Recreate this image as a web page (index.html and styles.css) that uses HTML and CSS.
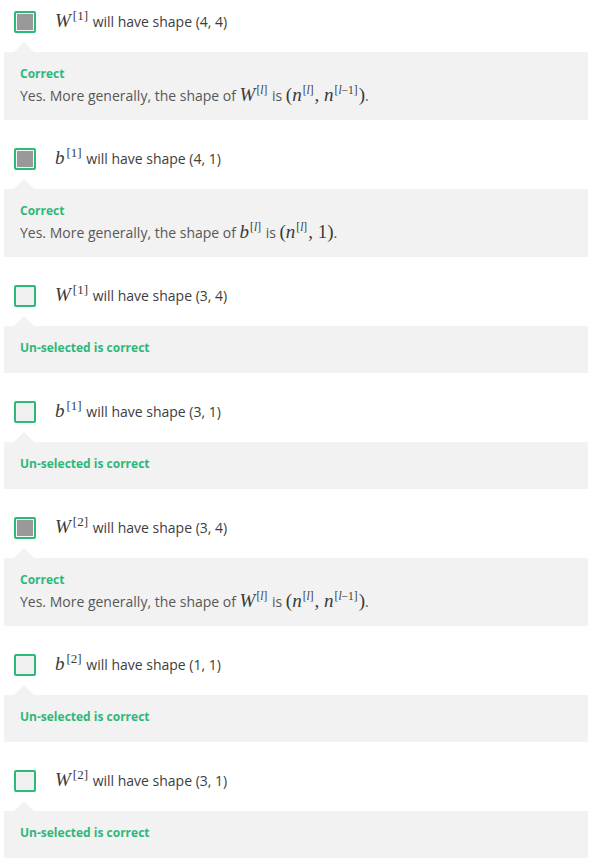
FILE: index.html
```html
<!DOCTYPE html>
<html>
<head>
<meta charset="utf-8">
<link rel="stylesheet" href="styles.css">
</head>
<body>
<div class="quiz">
  <div class="item">
    <div class="option">
      <span class="cb checked"></span>
      <span class="opt-text"><span class="m"><i class="mi">W</i><span class="sup">[1]</span></span> will have shape (4, 4)</span>
    </div>
    <div class="feedback">
      <div class="label">Correct</div>
      <div class="body">Yes. More generally, the shape of <span class="m"><i class="mi">W</i><span class="sup">[<i>l</i>]</span></span> is <span class="m"><span class="paren">(</span><i class="mi">n</i><span class="sup">[<i>l</i>]</span>, <i class="mi">n</i><span class="sup">[<i>l</i>−1]</span><span class="paren">)</span></span>.</div>
    </div>
  </div>

  <div class="item">
    <div class="option">
      <span class="cb checked"></span>
      <span class="opt-text"><span class="m"><i class="mi">b</i><span class="sup">[1]</span></span> will have shape (4, 1)</span>
    </div>
    <div class="feedback">
      <div class="label">Correct</div>
      <div class="body">Yes. More generally, the shape of <span class="m"><i class="mi">b</i><span class="sup">[<i>l</i>]</span></span> is <span class="m"><span class="paren">(</span><i class="mi">n</i><span class="sup">[<i>l</i>]</span>, 1<span class="paren">)</span></span>.</div>
    </div>
  </div>

  <div class="item">
    <div class="option">
      <span class="cb"></span>
      <span class="opt-text"><span class="m"><i class="mi">W</i><span class="sup">[1]</span></span> will have shape (3, 4)</span>
    </div>
    <div class="feedback short">
      <div class="label">Un-selected is correct</div>
    </div>
  </div>

  <div class="item">
    <div class="option">
      <span class="cb"></span>
      <span class="opt-text"><span class="m"><i class="mi">b</i><span class="sup">[1]</span></span> will have shape (3, 1)</span>
    </div>
    <div class="feedback short">
      <div class="label">Un-selected is correct</div>
    </div>
  </div>

  <div class="item">
    <div class="option">
      <span class="cb checked"></span>
      <span class="opt-text"><span class="m"><i class="mi">W</i><span class="sup">[2]</span></span> will have shape (3, 4)</span>
    </div>
    <div class="feedback">
      <div class="label">Correct</div>
      <div class="body">Yes. More generally, the shape of <span class="m"><i class="mi">W</i><span class="sup">[<i>l</i>]</span></span> is <span class="m"><span class="paren">(</span><i class="mi">n</i><span class="sup">[<i>l</i>]</span>, <i class="mi">n</i><span class="sup">[<i>l</i>−1]</span><span class="paren">)</span></span>.</div>
    </div>
  </div>

  <div class="item">
    <div class="option">
      <span class="cb"></span>
      <span class="opt-text"><span class="m"><i class="mi">b</i><span class="sup">[2]</span></span> will have shape (1, 1)</span>
    </div>
    <div class="feedback short">
      <div class="label">Un-selected is correct</div>
    </div>
  </div>

  <div class="item">
    <div class="option">
      <span class="cb"></span>
      <span class="opt-text"><span class="m"><i class="mi">W</i><span class="sup">[2]</span></span> will have shape (3, 1)</span>
    </div>
    <div class="feedback short">
      <div class="label">Un-selected is correct</div>
    </div>
  </div>
</div>
</body>
</html>
```

FILE: styles.css
```css
html, body {
  margin: 0;
  padding: 0;
  background: #ffffff;
}

body {
  font-family: "Open Sans", "Liberation Sans", sans-serif;
  color: #444444;
}

.quiz {
  padding: 11px 8px 0 4px;
}

.item {
  margin-bottom: 28px;
}

.option {
  display: flex;
  align-items: center;
  height: 22px;
  padding-left: 10px;
  gap: 19px;
}

.cb {
  box-sizing: border-box;
  width: 22px;
  height: 22px;
  border: 2px solid #2dba78;
  border-radius: 2px;
  background: #f0f0f0;
  flex: none;
}

.cb.checked {
  background: #999999;
  box-shadow: inset 0 0 0 1px #f4f4f4;
}

.opt-text {
  font-size: 14px;
  line-height: 22px;
  height: 22px;
  color: #3d3d3d;
  white-space: nowrap;
}

.m {
  font-family: "Liberation Serif", "DejaVu Serif", serif;
  font-size: 19px;
  line-height: 0;
  color: #3a3a3a;
}

.mi {
  font-style: italic;
  font-weight: 400;
}

.sup {
  position: relative;
  top: -7px;
  font-family: "Liberation Serif", serif;
  font-size: 13px;
  margin-left: 2px;
  margin-right: 1px;
}

.sup i {
  font-style: italic;
}

.body .sup {
  font-size: 11.5px;
  margin-left: 1px;
}

.paren {
  font-family: "Liberation Serif", serif;
  font-size: 19px;
  font-weight: 400;
}

.feedback {
  position: relative;
  margin-top: 19px;
  background: #f2f2f2;
  padding: 12px 16px 12px 16px;
}

.feedback.short {
  padding-bottom: 15px;
}

.feedback::before {
  content: "";
  position: absolute;
  top: -10px;
  left: 10px;
  width: 0;
  height: 0;
  border-left: 10px solid transparent;
  border-right: 10px solid transparent;
  border-bottom: 10px solid #f2f2f2;
}

.label {
  font-size: 12px;
  font-weight: 700;
  line-height: 20px;
  height: 20px;
  color: #2db87a;
}

.body {
  font-size: 14px;
  line-height: 24px;
  height: 24px;
  color: #575757;
  white-space: nowrap;
}
```
